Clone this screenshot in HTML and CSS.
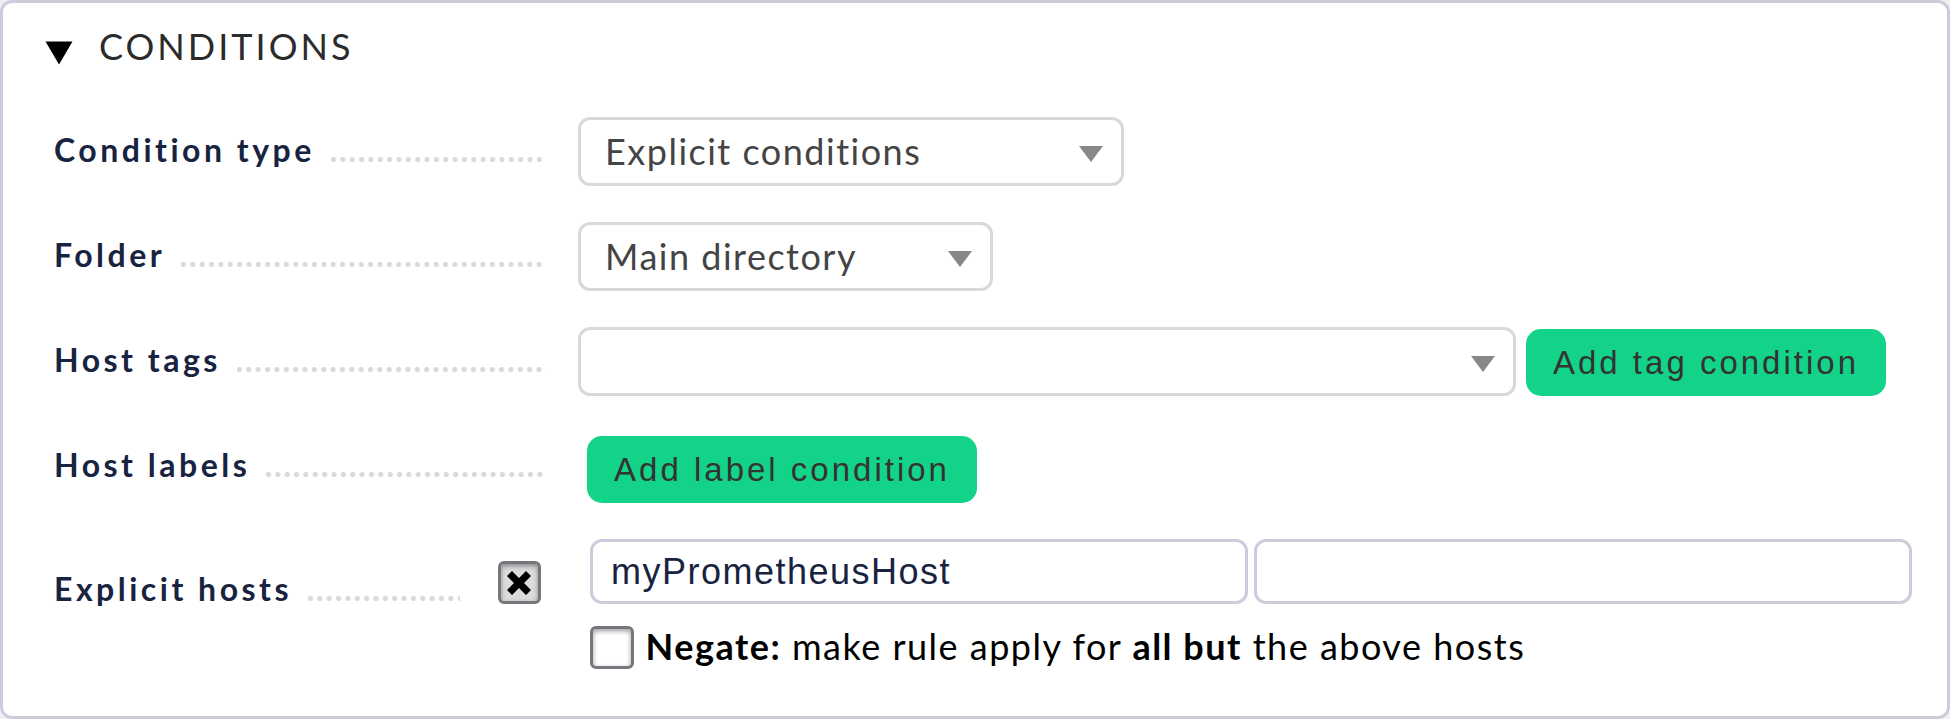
FILE: index.html
```html
<!DOCTYPE html>
<html lang="en">
<head>
<meta charset="utf-8">
<title>Conditions</title>
<link rel="stylesheet" href="styles.css">
</head>
<body>
<main class="panel">
  <header class="panel-head">
    <svg class="toggle" width="28" height="24" viewBox="0 0 28 24"><path d="M.5 .5H27.500L14 23.500Z"/></svg>
    <h1 class="title">CONDITIONS</h1>
  </header>
  <section class="row">
    <div class="legend"><span class="label">Condition type</span><span class="dots"></span></div>
    <div class="select select-type"><span class="value">Explicit conditions</span><svg class="arrow" width="24" height="16" viewBox="0 0 24 16"><path d="M0 0H24L12 16Z"/></svg></div>
  </section>
  <section class="row">
    <div class="legend"><span class="label">Folder</span><span class="dots"></span></div>
    <div class="select select-folder"><span class="value">Main directory</span><svg class="arrow" width="24" height="16" viewBox="0 0 24 16"><path d="M0 0H24L12 16Z"/></svg></div>
  </section>
  <section class="row">
    <div class="legend"><span class="label">Host tags</span><span class="dots"></span></div>
    <div class="select select-tags"><span class="value"></span><svg class="arrow" width="24" height="16" viewBox="0 0 24 16"><path d="M0 0H24L12 16Z"/></svg></div>
    <button class="button button-tag">Add tag condition</button>
  </section>
  <section class="row">
    <div class="legend"><span class="label">Host labels</span><span class="dots"></span></div>
    <button class="button button-label">Add label condition</button>
  </section>
  <section class="row row-hosts">
    <div class="legend legend-short"><span class="label">Explicit hosts</span><span class="dots"></span></div>
    <span class="checkbox checkbox-on"><svg width="24" height="24" viewBox="0 0 24 24"><path d="M5 0L12 7L19 0L24 5L17 12L24 19L19 24L12 17L5 24L0 19L7 12L0 5Z"/></svg></span>
    <div class="hosts">
      <div class="inputs">
        <div class="input">myPrometheusHost</div>
        <div class="input"></div>
      </div>
      <div class="negate"><span class="checkbox checkbox-off"></span><span class="negate-text"><b>Negate:</b> make rule apply for <b>all but</b> the above hosts</span></div>
    </div>
  </section>
</main>
</body>
</html>
```
FILE: styles.css
```css
* { box-sizing: border-box; }
body { margin: 0; background: #f0f0f4; font-family: Lato, sans-serif; }
.panel {
  width: 1950px;
  height: 719px;
  border: 3px solid #cccddc;
  border-radius: 12px;
  background: #fff;
  overflow: hidden;
}
.panel-head { display: flex; align-items: flex-start; height: 114px; padding: 21px 0 0 42px; }
.toggle { margin-top: 17px; }
.title { margin: 0 0 0 26px; font-size: 36px; line-height: 44px; font-weight: 400; letter-spacing: 3px; color: #2b2b2b; }
.row { display: flex; height: 105px; padding-left: 51px; align-items: flex-start; }
.legend { display: flex; width: 492px; padding-top: 13px; margin-right: 32px; font-size: 32px; line-height: 40px; letter-spacing: 3.5px; white-space: nowrap; flex: none; }
.label { font-weight: 700; color: #18233f; margin-right: 16px; }
.dots { flex: 1; height: 5px; margin-top: 27px; background: radial-gradient(circle at 2.5px 2.5px, #dadada 2.3px, transparent 2.9px) 0 0 / 9.36px 5px repeat-x; }
.select { display: flex; align-items: center; justify-content: space-between; height: 69px; border: 3px solid #d9d9d9; border-radius: 12px; padding: 0 18px 0 24px; font-size: 36px; letter-spacing: 1.5px; color: #444; white-space: nowrap; flex: none; }
.value { margin-top: -2px; }
.select-type { width: 546px; }
.select-folder { width: 415px; }
.select-tags { width: 938px; }
.arrow { fill: #888; margin-top: 5px; }
.button { height: 67px; border: 0; border-radius: 15px; background: #13d389; color: #333; padding: 0; font-family: "Liberation Sans", sans-serif; font-size: 33px; letter-spacing: 3px; white-space: nowrap; flex: none; }
.button-tag { width: 360px; margin: 2px 0 0 10px; }
.button-label { width: 390px; margin: 4px 0 0 9px; }
.row-hosts { height: 160px; padding-top: 2px; }
.legend-short { width: 406px; margin-right: 38px; padding-top: 30px; }
.checkbox { display: flex; align-items: center; justify-content: center; width: 43px; height: 43px; flex: none; border: 3px solid #74777b; border-radius: 6px; background: #fff; box-shadow: inset 0 2px 5px rgba(0, 0, 0, .4); }
.checkbox-on { margin: 22px 49px 0 0; padding: 0 1px 0 0; background: #dcdcdc; }
.checkbox-off { width: 44px; }
.inputs { display: flex; gap: 6px; }
.input { width: 658px; height: 65px; border: 3px solid #cccddc; border-radius: 12px; padding: 0 18px; font-family: "Liberation Sans", sans-serif; font-size: 36px; line-height: 59px; letter-spacing: 1.5px; color: #18233f; }
.negate { display: flex; align-items: center; margin-top: 22px; height: 43px; }
.negate-text { margin: -2px 0 0 11.5px; font-size: 36px; letter-spacing: 1.5px; line-height: 43px; color: #000; white-space: nowrap; }
```
